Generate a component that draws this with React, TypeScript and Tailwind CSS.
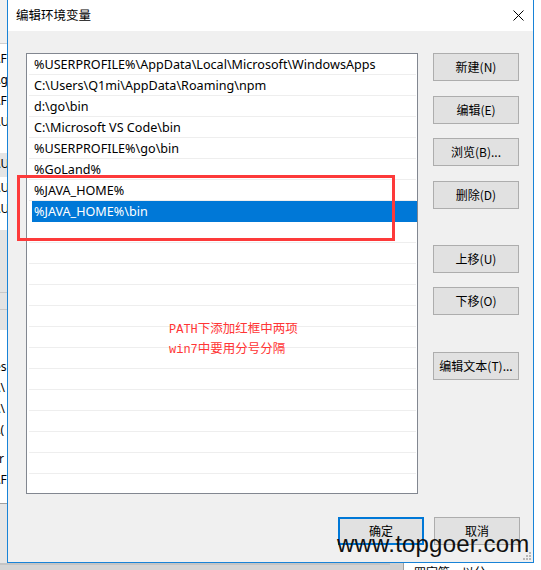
import React from "react";

const rows = [
  "%USERPROFILE%\\AppData\\Local\\Microsoft\\WindowsApps",
  "C:\\Users\\Q1mi\\AppData\\Roaming\\npm",
  "d:\\go\\bin",
  "C:\\Microsoft VS Code\\bin",
  "%USERPROFILE%\\go\\bin",
  "%GoLand%",
  "%JAVA_HOME%",
  "%JAVA_HOME%\\bin",
];

const cjk = { fontFamily: '"Noto Sans CJK SC", "Noto Sans", sans-serif' };
const ui = { fontFamily: '"Noto Sans", "Noto Sans CJK SC", sans-serif' };
const mono = { fontFamily: '"Liberation Mono", monospace' };

function Btn({ label, className = "" }: { label: string; className?: string }) {
  return (
    <div
      className={
        "w-[86px] h-[28px] bg-[#e1e1e1] border border-[#adadad] flex items-center justify-center text-[12px] text-black " +
        className
      }
      style={cjk}
    >
      {label}
    </div>
  );
}

export default function App() {
  const all = Array.from({ length: 21 }, (_, i) => rows[i] ?? "");
  return (
    <div className="w-[541px] h-[570px] overflow-hidden bg-white flex flex-col" style={ui}>
      <div className="flex h-[563px]">
        {/* left background strip */}
        <div className="w-[7px] flex flex-col text-[12px] text-black overflow-hidden leading-[21px]">
          <div className="h-[44px] bg-[#f0f0f0] border-b border-[#d0d0d0]" />
          <div className="h-[109px] bg-white pl-0 flex flex-col pt-[4px]">
            <div className="-ml-[4px] whitespace-nowrap">\F</div>
            <div className="-ml-[4px] whitespace-nowrap">\g</div>
            <div className="-ml-[4px] whitespace-nowrap">\F</div>
            <div className="-ml-[4px] whitespace-nowrap">\U</div>
          </div>
          <div className="h-[24px] bg-[#e5e5e5] -ml-[4px] whitespace-nowrap">\U</div>
          <div className="h-[53px] bg-white flex flex-col">
            <div className="-ml-[4px] whitespace-nowrap">\U</div>
            <div className="-ml-[4px] whitespace-nowrap">\U</div>
          </div>
          <div className="h-[100px] bg-[#e3e3e3] flex flex-col">
            <div className="h-[63px] border-b border-[#c8c8c8]" />
            <div className="h-[17px] border-b border-[#c8c8c8]" />
          </div>
          <div className="h-[173px] bg-white flex flex-col pt-[26px] leading-[21px]">
            <div className="-ml-[6px] whitespace-nowrap">es</div>
            <div className="-ml-[4px] whitespace-nowrap">\\</div>
            <div className="-ml-[4px] whitespace-nowrap">\\</div>
            <div className="-ml-[4px] whitespace-nowrap">\(</div>
            <div className="h-[8px]" />
            <div className="-ml-[4px] whitespace-nowrap">ir</div>
            <div className="-ml-[4px] whitespace-nowrap">\F</div>
          </div>
          <div className="flex-1 bg-[#e6e6e6] border-t border-[#a0a0a0]" />
        </div>

        {/* dialog */}
        <div className="w-[527px] h-[563px] border-l border-r border-b border-[#1883d7] flex flex-col relative">
          <div className="h-[31px] bg-white flex items-center justify-between pl-[8px] pr-[9px]">
            <span className="text-[12.5px] text-black" style={cjk}>
              编辑环境变量
            </span>
            <svg width="11" height="11" viewBox="0 0 11 11">
              <path d="M0.5 0.5 L10.5 10.5 M10.5 0.5 L0.5 10.5" stroke="#000" strokeWidth="1" />
            </svg>
          </div>
          <div className="flex-1 bg-[#f0f0f0] flex pt-[22px] pl-[18px] relative">
            {/* list */}
            <div className="w-[392px] h-[441px] bg-white border border-[#828790] overflow-hidden relative">
              {all.map((t, i) => {
                const sel = i === 7;
                return (
                  <div key={i} className="h-[21px] flex flex-col">
                    <div
                      className={
                        "h-[20px] flex items-center pt-[2px] text-[12.6px] whitespace-nowrap " +
                        (sel ? "ml-[5px] bg-[#0078d7] text-white pl-[2px]" : "pl-[7px] text-black")
                      }
                    >
                      {t}
                    </div>
                    <div className={sel ? "h-px ml-[5px] bg-[#0078d7]" : "h-px ml-[2px] mr-px bg-[#eeeeee]"} />
                  </div>
                );
              })}
              <div
                className="absolute left-[142px] top-[265px] text-[12.5px] leading-[17px] text-[#ff3535] whitespace-nowrap"
                style={cjk}
              >
                <div>
                  <span className="text-[12px]" style={mono}>PATH</span>
                  下添加红框中两项
                </div>
                <div>
                  <span className="text-[12px]" style={mono}>win7</span>
                  中要用分号分隔
                </div>
              </div>
            </div>
            {/* buttons */}
            <div className="flex flex-col ml-[15px]">
              <Btn label="新建(N)" />
              <Btn label="编辑(E)" className="mt-[15px]" />
              <Btn label="浏览(B)..." className="mt-[14px]" />
              <Btn label="删除(D)" className="mt-[15px]" />
              <Btn label="上移(U)" className="mt-[36px]" />
              <Btn label="下移(O)" className="mt-[14px]" />
              <Btn label="编辑文本(T)..." className="mt-[37px]" />
            </div>
            {/* red box overlay */}
            <div className="absolute left-[9px] top-[144px] w-[378px] h-[66px] border-[3px] border-[#fd3a3a]" />
            {/* OK / Cancel */}
            <div className="absolute left-[330px] top-[486px] flex gap-[10px]">
              <div
                className="w-[86px] h-[28px] bg-[#e1e1e1] border-2 border-[#0078d7] flex items-center justify-center text-[12px] text-black"
                style={cjk}
              >
                确定
              </div>
              <Btn label="取消" />
            </div>
            {/* size grip */}
            <svg width="8" height="8" viewBox="0 0 8 8" className="absolute right-[2px] bottom-[2px]">
              <rect x="6" y="0" width="2" height="2" fill="#b8b8b8" />
              <rect x="3" y="3" width="2" height="2" fill="#b8b8b8" />
              <rect x="6" y="3" width="2" height="2" fill="#b8b8b8" />
              <rect x="0" y="6" width="2" height="2" fill="#b8b8b8" />
              <rect x="3" y="6" width="2" height="2" fill="#b8b8b8" />
              <rect x="6" y="6" width="2" height="2" fill="#b8b8b8" />
            </svg>
          </div>
          {/* watermark */}
          <div
            className="absolute left-[329px] top-[532px] text-[24px] leading-[24px] tracking-[0.2px] text-[#111] whitespace-nowrap"
            style={{ fontFamily: '"Liberation Sans", Arial, sans-serif' }}
          >
            www.topgoer.com
          </div>
        </div>

        {/* right strip */}
        <div className="w-[7px] bg-white" />
      </div>
      {/* bottom strip */}
      <div className="h-[7px] flex">
        <div className="w-[390px] bg-[#d4d4d4] border-t-2 border-[#c4c4c4]" />
        <div className="w-[13px] bg-[#d0d0d0]" />
        <div
          className="flex-1 bg-white border-l border-[#a0a0a0] overflow-hidden text-[12px] leading-[12px] pl-[10px] pt-[3px] text-black"
          style={cjk}
        >
          四字符，以分
        </div>
      </div>
    </div>
  );
}
